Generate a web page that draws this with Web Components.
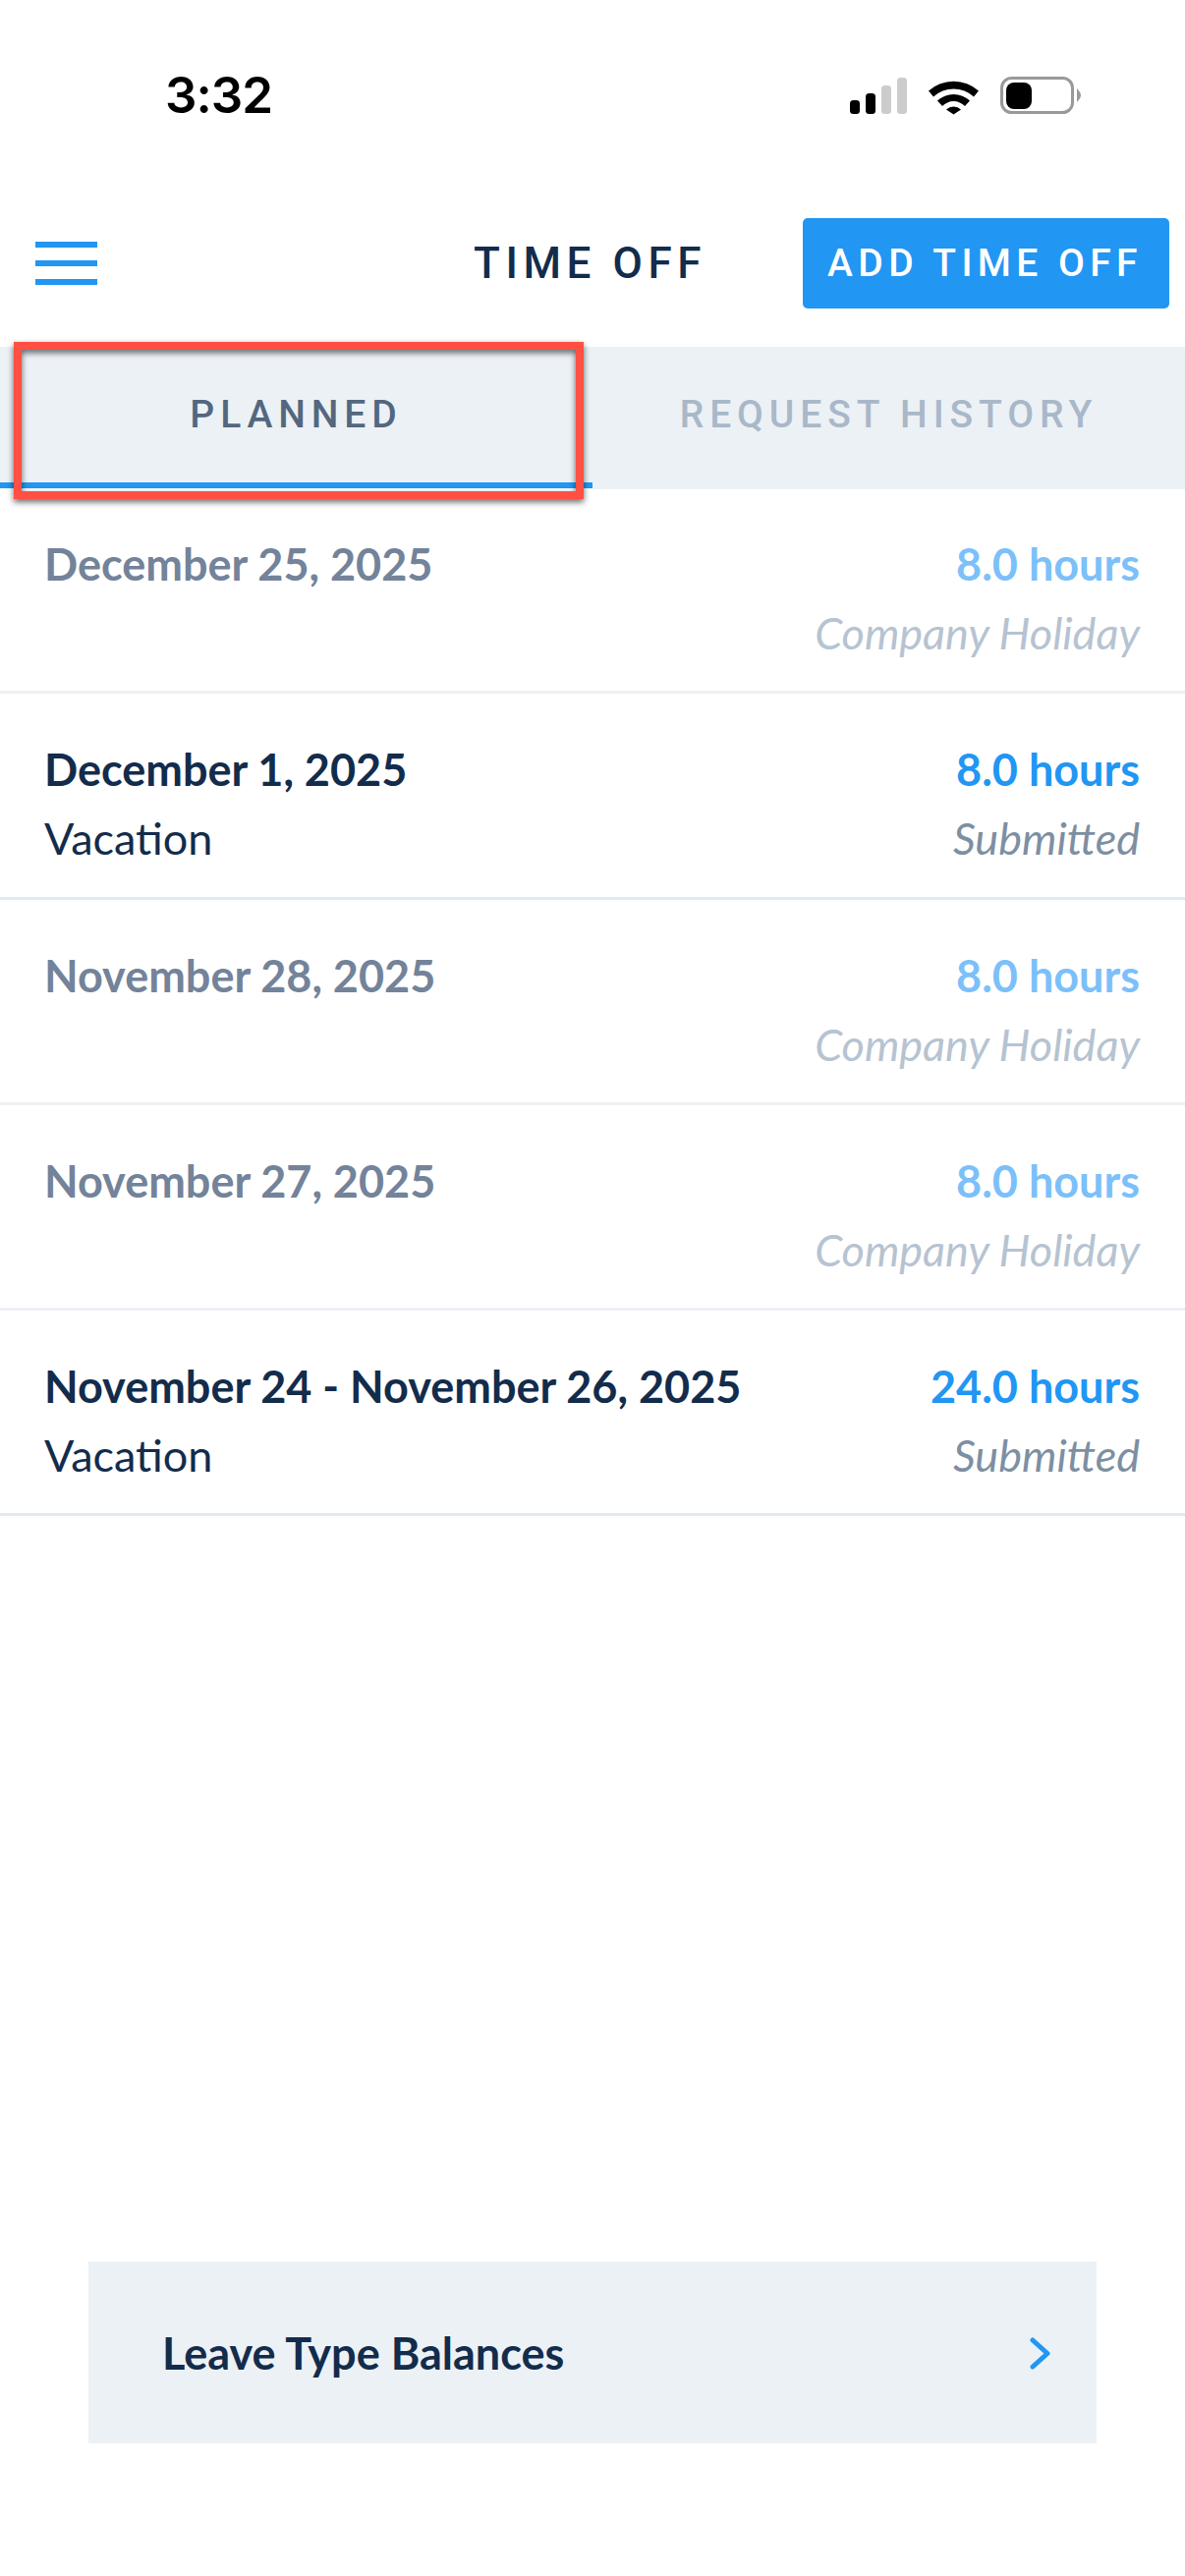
<!DOCTYPE html>
<html>
<head>
<meta charset="utf-8">
<title>Time Off</title>
<style>
  html, body { margin: 0; padding: 0; background: #fff; }
  body { font-family: "Lato", "Liberation Sans", sans-serif; color: #132c4c; }
</style>
</head>
<body>
<time-off-screen>
  <status-bar slot="status" time="3:32"></status-bar>
  <top-bar slot="header" heading="TIME OFF" action="ADD TIME OFF"></top-bar>
  <tab-strip slot="tabs">
    <tab-item active>PLANNED</tab-item>
    <tab-item>REQUEST HISTORY</tab-item>
    <mark-box></mark-box>
  </tab-strip>
  <leave-row muted>
    <span slot="date">December 25, 2025</span>
    <span slot="hours">8.0 hours</span>
    <span slot="state">Company Holiday</span>
  </leave-row>
  <leave-row strong>
    <span slot="date">December 1, 2025</span>
    <span slot="type">Vacation</span>
    <span slot="hours">8.0 hours</span>
    <span slot="state">Submitted</span>
  </leave-row>
  <leave-row muted>
    <span slot="date">November 28, 2025</span>
    <span slot="hours">8.0 hours</span>
    <span slot="state">Company Holiday</span>
  </leave-row>
  <leave-row muted>
    <span slot="date">November 27, 2025</span>
    <span slot="hours">8.0 hours</span>
    <span slot="state">Company Holiday</span>
  </leave-row>
  <leave-row strong>
    <span slot="date">November 24 - November 26, 2025</span>
    <span slot="type">Vacation</span>
    <span slot="hours">24.0 hours</span>
    <span slot="state">Submitted</span>
  </leave-row>
  <balance-link slot="footer">Leave Type Balances</balance-link>
</time-off-screen>

<script>
  const define = (name, html, setup) => {
    const template = document.createElement('template')
    template.innerHTML = html
    customElements.define(name, class extends HTMLElement {
      constructor() {
        super()
        this.attachShadow({ mode: 'open' }).appendChild(template.content.cloneNode(true))
        if (setup) setup(this, this.shadowRoot)
      }
    })
  }

  define('time-off-screen', `
    <style>
      :host { display: flex; flex-direction: column; width: 1206px; height: 2622px; overflow: hidden; background: #fff; }
      .footer { margin-top: auto; padding: 0 90px 135px; }
    </style>
    <slot name="status"></slot>
    <slot name="header"></slot>
    <slot name="tabs"></slot>
    <slot></slot>
    <div class="footer"><slot name="footer"></slot></div>
  `)

  define('status-bar', `
    <style>
      :host { display: flex; align-items: flex-start; justify-content: space-between; height: 222px; box-sizing: border-box; padding: 68px 106px 0 168px; }
      .time { font: 600 51px/58px "Inter", "Liberation Sans", sans-serif; color: #000; letter-spacing: -1px; }
      svg { display: block; margin-top: 10px; }
    </style>
    <span class="time"></span>
    <svg width="235" height="40" viewBox="0 0 235 40">
      <rect x="0" y="24" width="10" height="14" rx="3.5" fill="#000"/>
      <rect x="16" y="17" width="10" height="21" rx="3.5" fill="#000"/>
      <rect x="32" y="9" width="10" height="29" rx="3.5" fill="#ccc"/>
      <rect x="48" y="1" width="10" height="37" rx="3.5" fill="#ccc"/>
      <path d="M80 14.5 A38 38 0 0 1 131 14.5 L126 20.5 A30 30 0 0 0 85 20.5 Z" fill="#000"/>
      <path d="M89 24.5 A24 24 0 0 1 122 24.5 L117 30 A16 16 0 0 0 94 30 Z" fill="#000"/>
      <path d="M98 33.5 A11 11 0 0 1 113 33.5 L105.5 38.5 Z" fill="#000"/>
      <rect x="154.5" y="1.5" width="72" height="35" rx="10" fill="none" stroke="#999" stroke-width="3"/>
      <rect x="159" y="6" width="26" height="27" rx="8" fill="#000"/>
      <path d="M231 12 Q235 16 235 19 Q235 22 231 26 Z" fill="#999"/>
    </svg>
  `, (el, root) => {
    root.querySelector('.time').textContent = el.getAttribute('time')
  })

  define('top-bar', `
    <style>
      :host { display: flex; align-items: center; height: 92px; padding: 0 16px 0 36px; margin-bottom: 39px; }
      .menu { display: flex; flex-direction: column; gap: 13px; width: 63px; }
      .menu i { display: block; height: 6px; background: #2196f3; }
      h1 { flex: 1; margin: 0; padding-left: 383px; font: 500 44px/1 "Roboto", sans-serif; letter-spacing: 5.6px; color: #132c4c; }
      button { all: unset; box-sizing: border-box; width: 373px; height: 92px; padding-right: 2px; border-radius: 5px; background: #2196f3; color: #fff; text-align: center; font: 500 39px/92px "Roboto", sans-serif; letter-spacing: 5.4px; }
    </style>
    <div class="menu"><i></i><i></i><i></i></div>
    <h1></h1>
    <button></button>
  `, (el, root) => {
    root.querySelector('h1').textContent = el.getAttribute('heading')
    root.querySelector('button').textContent = el.getAttribute('action')
  })

  define('tab-strip', `
    <style>
      :host { display: flex; height: 144px; background: #ecf1f6; position: relative; }
      ::slotted(tab-item) { flex: 1 1 0; }
    </style>
    <slot></slot>
  `)

  define('tab-item', `
    <style>
      :host { display: flex; align-items: center; justify-content: center; box-sizing: border-box; height: 144px; padding-bottom: 6px; font: 500 39px/1 "Roboto", sans-serif; letter-spacing: 5.9px; color: #a9b8c8; box-shadow: 0 1px 0 #ecf1f6; }
      :host([active]) { color: #53677f; border-bottom: 6px solid #2196f3; padding-bottom: 0; box-shadow: none; }
    </style>
    <slot></slot>
  `)

  // the red box someone drew over the screenshot
  define('mark-box', `
    <style>
      :host { position: absolute; left: 14px; top: -5px; width: 580px; height: 160px; box-sizing: border-box; border: 8px solid #ff5043; filter: drop-shadow(0 3px 3px rgba(0, 0, 0, .6)); }
    </style>
  `)

  define('leave-row', `
    <style>
      :host { display: flex; justify-content: space-between; box-sizing: border-box; height: 209.25px; padding: 42px 46px 0 45px; border-bottom: 3px solid #e1e9f1; font: 400 45px/70px "Lato", sans-serif; color: #132c4c; }
      :host([muted]) { border-bottom-color: #edf1f5; }
      .col { display: flex; flex-direction: column; }
      .right { align-items: flex-end; }
      .date { font-weight: 700; }
      .hours { font-weight: 700; color: #2196f3; }
      .state { font-style: italic; color: #7d8fa2; }
      :host([muted]) .date { color: #73839a; }
      :host([muted]) .hours { color: #7cc0fa; }
      :host([muted]) .state { color: #b6c3d1; }
    </style>
    <div class="col">
      <span class="date"><slot name="date"></slot></span>
      <span class="type"><slot name="type"></slot></span>
    </div>
    <div class="col right">
      <span class="hours"><slot name="hours"></slot></span>
      <span class="state"><slot name="state"></slot></span>
    </div>
  `)

  define('balance-link', `
    <style>
      :host { display: flex; align-items: center; justify-content: space-between; height: 185px; padding: 2px 47px 0 75px; box-sizing: border-box; background: #ecf1f6; font: 700 45px/1 "Lato", sans-serif; color: #132c4c; }
      svg { display: block; }
    </style>
    <slot></slot>
    <svg width="21" height="33" viewBox="0 0 21 33"><path d="M3 3 L18 16.5 L3 30" fill="none" stroke="#2196f3" stroke-width="5" stroke-linecap="round" stroke-linejoin="round"/></svg>
  `)
</script>
</body>
</html>
